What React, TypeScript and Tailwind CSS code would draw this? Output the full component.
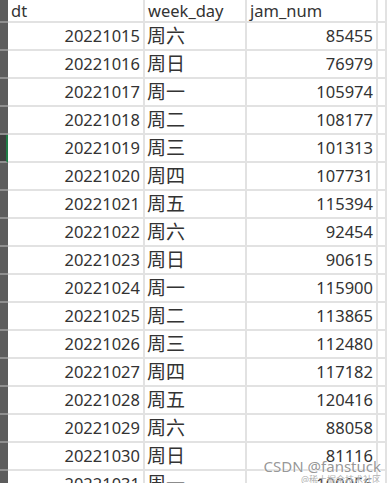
import React from 'react';

const rows: [string, string, string][] = [
    ['20221015', '周六', '85455'],
    ['20221016', '周日', '76979'],
    ['20221017', '周一', '105974'],
    ['20221018', '周二', '108177'],
    ['20221019', '周三', '101313'],
    ['20221020', '周四', '107731'],
    ['20221021', '周五', '115394'],
    ['20221022', '周六', '92454'],
    ['20221023', '周日', '90615'],
    ['20221024', '周一', '115900'],
    ['20221025', '周二', '113865'],
    ['20221026', '周三', '112480'],
    ['20221027', '周四', '117182'],
    ['20221028', '周五', '120416'],
    ['20221029', '周六', '88058'],
    ['20221030', '周日', '81116'],
    ['20221031', '周一', '100056'],
];

const cell = 'border-r-2 border-b-2 border-[#e2e2e2] flex items-center';

export default function App() {
    return (
        <div
            className="relative w-[387px] h-[483px] overflow-hidden bg-white text-[#333] text-[16.5px]"
            style={{ fontFamily: '"Noto Sans", "Noto Sans CJK SC", sans-serif' }}
        >
            <div className="grid grid-cols-[8px_137px_102px_131px_1fr]">
                {/* header */}
                <div className="h-[23px] bg-[#5c5c5c] border-b-2 border-[#8e8e8e]" />
                <div className={`${cell} h-[23px] pl-[3px] leading-[20px]`}>dt</div>
                <div className={`${cell} h-[23px] pl-[3px] leading-[20px]`}>week_day</div>
                <div className={`${cell} h-[23px] pl-[3px] leading-[20px]`}>jam_num</div>
                <div className={`${cell} h-[23px]`} />

                {rows.map(([dt, wd, num], i) => (
                    <React.Fragment key={dt}>
                        <div
                            className={
                                i === 4
                                    ? 'h-[28px] bg-[#3e3e3e] border-b-2 border-[#8e8e8e] border-r-2 border-r-[#1f7a45]'
                                    : 'h-[28px] bg-[#5c5c5c] border-b-2 border-[#8e8e8e]'
                            }
                        />
                        <div className={`${cell} h-[28px] justify-end pr-[3px]`}>{dt}</div>
                        <div className={`${cell} h-[28px] pl-[2px] text-[19px]`}>{wd}</div>
                        <div className={`${cell} h-[28px] justify-end pr-[3px]`}>{num}</div>
                        <div className={`${cell} h-[28px]`} />
                    </React.Fragment>
                ))}
            </div>

            {/* watermark */}
            <div className="absolute right-[6px] bottom-[-1px] flex flex-col items-end leading-none pointer-events-none">
                <span className="text-[15px] text-[#8a8a8a]/90 [text-shadow:0_0_2px_#fff,0_0_2px_#fff]">CSDN @fanstuck</span>
                <span className="text-[9px] mt-[1px] text-[#9a9a9a]/80 [text-shadow:0_0_1px_#fff]">@稀土掘金技术社区</span>
            </div>
        </div>
    );
}
